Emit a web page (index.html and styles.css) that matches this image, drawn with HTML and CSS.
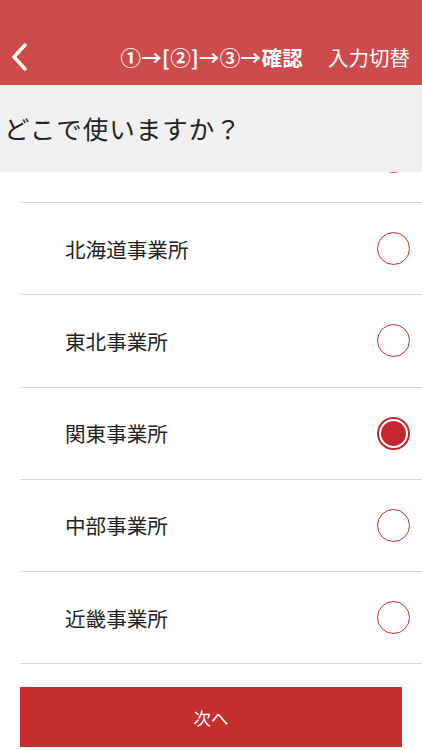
FILE: index.html
```html
<!DOCTYPE html>
<html lang="ja">
<head>
  <meta charset="UTF-8">
  <meta name="viewport" content="width=device-width, initial-scale=1.0">
  <title>どこで使いますか？</title>
  <link rel="stylesheet" href="styles.css">
</head>
<body>
  <header class="app-bar">
    <button class="back" aria-label="戻る">
      <svg width="18" height="28" viewBox="0 0 18 28">
        <path d="M15 2 L4 14 L15 26" fill="none" stroke="#fff" stroke-width="3.4" stroke-linecap="round" stroke-linejoin="round"/>
      </svg>
    </button>
    <span class="steps">①→[②]→③→確認</span>
    <span class="switch">入力切替</span>
  </header>

  <div class="question">どこで使いますか？</div>

  <div class="list">
    <div class="list-inner">
      <label class="row">
        <span class="name"></span>
        <span class="radio"></span>
      </label>
      <label class="row">
        <span class="name">北海道事業所</span>
        <span class="radio"></span>
      </label>
      <label class="row">
        <span class="name">東北事業所</span>
        <span class="radio"></span>
      </label>
      <label class="row">
        <span class="name">関東事業所</span>
        <span class="radio checked"></span>
      </label>
      <label class="row">
        <span class="name">中部事業所</span>
        <span class="radio"></span>
      </label>
      <label class="row">
        <span class="name">近畿事業所</span>
        <span class="radio"></span>
      </label>
    </div>
  </div>

  <div class="actions">
    <button class="next">次へ</button>
  </div>
</body>
</html>
```

FILE: styles.css
```css
:root {
  --bar: #cd4b4b;
  --accent: #c4282e;
  --button: #c62d2d;
  --band: #f0f0f0;
  --line: #d9d9d9;
  --text: #222;
}

* {
  margin: 0;
  padding: 0;
  box-sizing: border-box;
}

body {
  font-family: 'Noto Sans CJK JP', 'Noto Sans', sans-serif;
  background: #fff;
  color: var(--text);
  width: 422px;
  height: 750px;
  overflow: hidden;
}

/* Top bar */
.app-bar {
  height: 85px;
  padding: 28px 12px 0 10px;
  background: var(--bar);
  color: #fff;
  display: flex;
  align-items: center;
}

.back {
  background: none;
  border: none;
  display: flex;
  padding: 0;
  cursor: pointer;
}

.steps {
  margin-left: auto;
  font-size: 20.5px;
  font-weight: 700;
  letter-spacing: 0.3px;
}

.switch {
  margin-left: 25px;
  font-size: 20.5px;
}

/* Question band */
.question {
  height: 87px;
  background: var(--band);
  display: flex;
  align-items: center;
  padding: 0 0 2px 4px;
  font-size: 25.5px;
  letter-spacing: 1px;
}

/* Choices */
.list {
  height: 504px;
  overflow: hidden;
  margin-left: 20px;
}

.list-inner {
  margin-top: -61px;
}

.row {
  height: 92.2px;
  border-bottom: 1px solid var(--line);
  display: flex;
  align-items: center;
  padding: 0 12px 0 45px;
  cursor: pointer;
}

.name {
  flex: 1;
  font-size: 20.6px;
}

.radio {
  width: 33px;
  height: 33px;
  border: 1.9px solid var(--accent);
  border-radius: 50%;
  display: flex;
  align-items: center;
  justify-content: center;
}

.radio.checked {
  border-width: 2px;
}

.radio.checked::after {
  content: '';
  width: 25px;
  height: 25px;
  border-radius: 50%;
  background: var(--accent);
}

/* Bottom action */
.actions {
  padding: 11px 20px 0;
}

.next {
  width: 100%;
  height: 60px;
  background: var(--button);
  color: #fff;
  border: none;
  font-family: inherit;
  font-size: 17.5px;
  cursor: pointer;
}
```
